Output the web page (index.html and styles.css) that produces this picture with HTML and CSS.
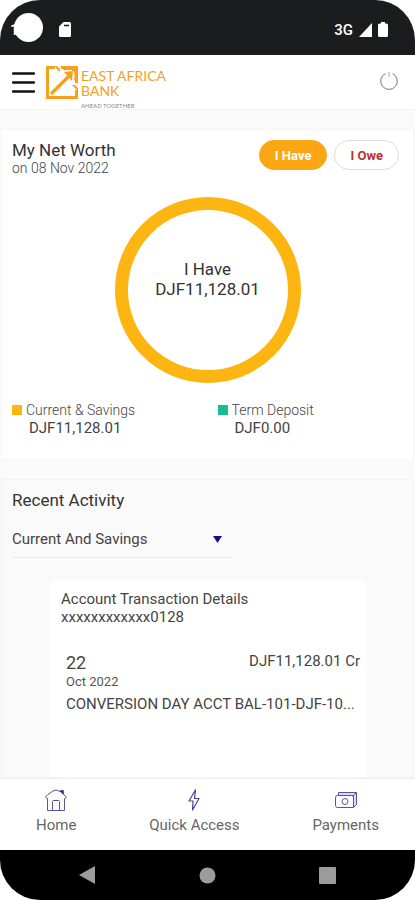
FILE: index.html
```html
<!DOCTYPE html>
<html lang="en">
<head>
<meta charset="utf-8">
<meta name="viewport" content="width=device-width, initial-scale=1">
<title>East Africa Bank</title>
<link rel="stylesheet" href="styles.css">
</head>
<body>
<div class="phone">
  <div class="status">
    <div class="status-side">
      <span class="clock">1<span class="camera"></span></span>
      <svg width="12" height="15" viewBox="0 0 12 15"><path fill="#fff" d="M4.500 0H10.500Q12 0 12 1.500V13.500Q12 15 10.500 15H1.500Q0 15 0 13.500V4.500Z"/><path d="M5 3.500h5" stroke="#1b1c1e" stroke-width="1.500"/></svg>
    </div>
    <div class="status-side right">
      <span>3G</span>
      <svg width="13" height="14" viewBox="0 0 13 14"><path fill="#fff" d="M13 0V14H0Z"/></svg>
      <svg width="10" height="15" viewBox="0 0 10 15"><path fill="#fff" d="M3 0h4v1.500h1.500Q10 1.500 10 3v10.500Q10 15 8.500 15h-7Q0 15 0 13.500V3Q0 1.500 1.500 1.500H3Z"/></svg>
    </div>
  </div>

  <header class="header">
    <button class="icon-button" type="button" aria-label="Menu">
      <svg width="23" height="21" viewBox="0 0 23 21"><path d="M1 1.500h21M1 10.500h21M1 19.500h21" stroke="#111" stroke-width="2.400" stroke-linecap="round"/></svg>
    </button>
    <a class="brand" href="#">
      <svg width="32" height="33" viewBox="0 0 32 33" fill="none" stroke="#f6a021"><path d="M9 1.500H1.500V31.500H30.500V24" stroke-width="3"/><path d="M5 28L25 8" stroke-width="3.200"/><path d="M8 0L14 6V3L11 0ZM32 25L26 19H29L32 22Z" fill="#f6a021" stroke="none"/><path d="M15 1.500H30.500V17" stroke-width="3"/><path d="M14 0L19 5H28V14L32 18V0Z" fill="#f6a021" stroke="none"/><path d="M18 6L27 5L26 15Z" fill="#f6a021" stroke="none"/><path d="M19 4.500L26 4.500M28 7V13" stroke="#fff" stroke-width="1"/></svg>
      <span class="brand-text">
        <span class="brand-name">EAST AFRICA</span>
        <span class="brand-name">BANK</span>
        <span class="tagline">AHEAD TOGETHER</span>
      </span>
    </a>
    <button class="icon-button power" type="button" aria-label="Log out">
      <svg width="20" height="20" viewBox="0 0 20 20" fill="none" stroke="#777"><path d="M6.500 2.600A8.300 8.300 0 1 0 13.500 2.600"/><path d="M10 1v5" stroke="#aaa"/></svg>
    </button>
  </header>

  <main class="main">
    <section class="worth">
      <div class="worth-head">
        <div>
          <h1 class="title">My Net Worth</h1>
          <p class="date">on 08 Nov 2022</p>
        </div>
        <div class="toggle">
          <button class="pill active" type="button">I Have</button>
          <button class="pill" type="button">I Owe</button>
        </div>
      </div>
      <div class="ring"><span>I Have</span><span>DJF11,128.01</span></div>
      <div class="legend">
        <div><span class="key"><i class="swatch"></i>Current &amp; Savings</span><span class="amount">DJF11,128.01</span></div>
        <div><span class="key"><i class="swatch green"></i>Term Deposit</span><span class="amount">DJF0.00</span></div>
      </div>
    </section>

    <section class="activity">
      <h2 class="title">Recent Activity</h2>
      <div class="picker">
        <select aria-label="Account type"><option>Current And Savings</option></select>
        <svg width="9" height="7" viewBox="0 0 9 7"><path fill="#1a0d8c" d="M0 0h9L4.500 7Z"/></svg>
      </div>
      <article class="details">
        <h3>Account Transaction Details</h3>
        <p>xxxxxxxxxxxx0128</p>
        <div class="entry">
          <div class="entry-top"><span class="day">22</span><span>DJF11,128.01 Cr</span></div>
          <p class="month">Oct 2022</p>
          <p class="memo">CONVERSION DAY ACCT BAL-101-DJF-10...</p>
        </div>
      </article>
    </section>
  </main>

  <nav class="tabs">
    <a href="#">
      <svg width="22" height="22" viewBox="0 0 22 22" fill="none" stroke="#5a51a6" stroke-linejoin="round"><path d="M2.500 9.500V21.500H19.500V9.500M7.500 21.500V12.500Q7.500 11.500 8.500 11.500H13.500Q14.500 11.500 14.500 12.500V21.500"/><path d="M2.500 10L.5 8L3 5.500L8 2Q11 -.3 14 2L15.500 3V1.500H18.500V5.500L21.500 8L19.500 10"/><path d="M15 2h3v3.500z" fill="#30258c" stroke="none"/></svg>
      Home
    </a>
    <a href="#">
      <svg width="12" height="22" viewBox="0 0 12 22" fill="none" stroke="#4a409f" stroke-width="1.200" stroke-linejoin="round"><path d="M7.500 .8L1 12H5L4.500 21L11 9.500H6.500Z"/></svg>
      Quick Access
    </a>
    <a href="#">
      <svg width="24" height="22" viewBox="0 0 24 22" fill="none" stroke="#5a51a6" stroke-linejoin="round"><path fill="#dddaf0" d="M4.500 6.500V3.500H22.500V15.500L19.500 18.500V6.500Z"/><path d="M3.500 6.500H17.500Q19.500 6.500 19.500 8.500V18.500H3.500Q1.500 18.500 1.500 16.500V8.500Q1.500 6.500 3.500 6.500ZM19.500 6.500L22.500 3.500" fill="#fff"/><circle cx="11" cy="12.500" r="3"/></svg>
      Payments
    </a>
  </nav>

  <div class="system">
    <button class="icon-button" type="button" aria-label="Back"><svg width="16" height="18" viewBox="0 0 16 18"><path fill="#9c9c9c" d="M16 0V18L0 9Z"/></svg></button>
    <button class="icon-button" type="button" aria-label="Home screen"><svg width="17" height="17" viewBox="0 0 17 17"><circle cx="8.500" cy="8.500" r="8" fill="#9c9c9c"/></svg></button>
    <button class="icon-button" type="button" aria-label="Overview"><svg width="17" height="17" viewBox="0 0 17 17"><rect width="17" height="17" rx="1" fill="#9c9c9c"/></svg></button>
  </div>
</div>
</body>
</html>
```
FILE: styles.css
```css
* { box-sizing: border-box; }
body { margin: 0; background: #fff; font-family: Roboto, sans-serif; color: #444; }
h1, h2, h3, p { margin: 0; font-weight: 400; }
button, select { font: inherit; color: inherit; }
a { color: inherit; text-decoration: none; }
svg { display: block; flex: none; }

.phone { display: flex; flex-direction: column; height: 100vh; overflow: hidden; border-radius: 40px; background: #fff; }

.status { display: flex; justify-content: space-between; flex: none; height: 55px; padding: 4px 27px 0 10px; background: #1b1c1e; color: #fff; }
.status-side { display: flex; align-items: center; gap: 15px; font-weight: 500; font-size: 15px; }
.status-side.right { gap: 6px; }
.clock { position: relative; width: 34px; }
.camera { position: absolute; left: 4px; top: -8px; width: 29px; height: 29px; border-radius: 50%; background: #fff; }

.header { display: flex; align-items: center; flex: none; height: 55px; padding: 0 16px 0 12px; border-bottom: 1px solid #f4f4f4; }
.icon-button { display: block; padding: 0; border: 0; background: none; }
.power { margin: 0 0 2px auto; }
.brand { display: flex; gap: 3px; margin: 0 0 0 11px; padding-top: 11px; }
.brand-text { display: flex; flex-direction: column; padding-top: 2px; font-family: Lato, sans-serif; }
.brand-name { display: block; font-size: 14px; line-height: 15px; color: #f6a021; }
.tagline { margin-top: 4px; font-size: 6px; line-height: 8px; color: #888; }

.main { display: flex; flex-direction: column; flex: 1; gap: 19px; min-height: 0; padding-top: 19px; background: #fafafa; overflow: hidden; }
.worth { flex: none; margin: 0 1px; padding: 10px 10px 22px; border: 1px solid #f6f6f6; background: #fff; }
.worth-head { display: flex; justify-content: space-between; }
.title { font-size: 17px; line-height: 20px; color: #333; }
.date { font-size: 14px; line-height: 16px; font-weight: 300; }
.toggle { display: flex; gap: 7px; padding-right: 4px; }
.pill { height: 30px; padding: 0 15px; border: 1px solid #ddd; border-radius: 15px; background: #fff; color: #b83232; font-size: 13px; font-weight: 700; }
.pill.active { border-color: #fda615; background: #fda615; color: #fff; }
.ring { display: flex; flex-direction: column; align-items: center; width: 186px; height: 186px; margin: 21px auto 18px; padding-top: 49px; border: 13px solid #fdb611; border-radius: 50%; font-size: 17px; line-height: 20px; color: #333; }
.legend { display: grid; grid-template-columns: 1fr 1fr; gap: 20px; line-height: 18px; }
.key { display: flex; align-items: center; gap: 4px; font-size: 14px; font-weight: 300; }
.swatch { width: 10px; height: 10px; background: #fdb611; }
.swatch.green { background: #17bd8f; }
.amount { display: block; padding-left: 17px; font-size: 15px; }

.activity { flex: 1; min-height: 0; margin: 0 1px; padding: 10px; border: 1px solid #f3f3f3; overflow: hidden; }
.picker { position: relative; width: 220px; margin-top: 10px; border-bottom: 1px solid #e8e8e8; }
.picker select { display: block; width: 100%; height: 37px; padding: 0; border: 0; background: none; appearance: none; font-size: 15px; }
.picker svg { position: absolute; right: 10px; top: 16px; pointer-events: none; }
.details { min-height: 220px; margin: 22px 36px 0 38px; padding: 10px 7px 10px 11px; border-radius: 8px; background: #fff; font-size: 15px; line-height: 18px; }
.details h3 { font-size: 15px; }
.entry { padding: 25px 0 0 5px; }
.entry-top { display: flex; justify-content: space-between; line-height: 20px; }
.day { padding-top: 2px; font-size: 18px; }
.month { padding-top: 1px; font-size: 13px; line-height: 16px; color: #555; }
.memo { margin-top: 4px; line-height: 20px; white-space: nowrap; }

.tabs { display: flex; justify-content: space-between; flex: none; height: 72px; padding: 10px 36px 0; border-top: 1px solid #eee; background: #fff; }
.tabs a { display: flex; flex-direction: column; align-items: center; gap: 4px; font-size: 15px; line-height: 20px; color: #666; }
.system { display: flex; align-items: center; justify-content: space-between; flex: none; height: 50px; padding: 0 79px; background: #000; }
```
